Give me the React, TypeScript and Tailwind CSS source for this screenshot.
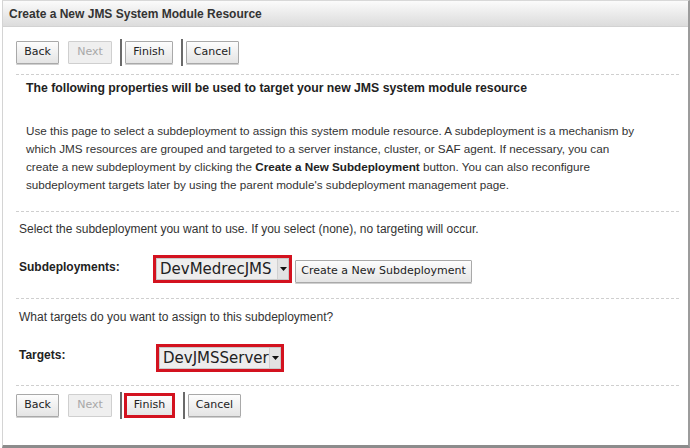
import React from "react";

const btn =
  "h-[23px] flex items-center justify-center whitespace-nowrap border border-[#a9a9a9] rounded-[1px] bg-gradient-to-b from-[#fdfdfd] to-[#e4e4e4] text-[11px] text-[#222] shadow-[0_1px_0_#cfcfcf]";
const btnDisabled =
  "h-[23px] flex items-center justify-center border border-[#cfcfcf] rounded-[1px] bg-[#efefef] text-[11px] text-[#a8a8a8]";

const dejavu = { fontFamily: '"DejaVu Sans", sans-serif' };

function ButtonRow({ redFinish }: { redFinish?: boolean }) {
  return (
    <div className="flex items-center h-[27px]" style={dejavu}>
      <div className={`${btn} w-[43px]`}>Back</div>
      <div className={`${btnDisabled} w-[44px] ml-[9px]`}>Next</div>
      <div className="w-[2px] h-[27px] bg-[#6a6a6a] ml-[8px]" />
      {redFinish ? (
        <div className="ml-[2px] border-[3px] border-[#d3121f] h-[25px] w-[51px] flex">
          <div className="h-full w-full flex items-center justify-center bg-gradient-to-b from-[#fdfdfd] to-[#e4e4e4] text-[11px] text-[#222]">
            Finish
          </div>
        </div>
      ) : (
        <div className={`${btn} w-[48px] ml-[3px]`}>Finish</div>
      )}
      <div className="w-[2px] h-[27px] bg-[#6a6a6a] ml-[8px]" />
      <div className={`${btn} w-[53px] ml-[3px]`}>Cancel</div>
    </div>
  );
}

function Dashed({ className = "" }: { className?: string }) {
  return <div className={`w-[663px] border-t border-dashed border-[#cfcfcf] ${className}`} />;
}

function RedSelect({ label, width }: { label: string; width: string }) {
  return (
    <div className={`border-[3px] border-[#d3121f] h-[28px] ${width} flex`}>
      <div
        className="flex-1 flex items-center bg-[#ededed] border border-[#c8c8c8] pl-[3px] text-[15px] text-[#222]"
        style={dejavu}
      >
        <span className="flex-1 whitespace-nowrap">{label}</span>
        <span className="w-[11px] h-full flex items-center justify-center bg-[#e2e2e2] border-l border-[#d0d0d0]">
          <svg width="7" height="4" viewBox="0 0 7 4">
            <path d="M0 0h7L3.5 4z" fill="#111" />
          </svg>
        </span>
      </div>
    </div>
  );
}

export default function App() {
  return (
    <div
      className="h-[448px] bg-white overflow-hidden flex flex-col border-l border-l-[#d4d4d4] border-r-2 border-r-[#9c9c9c] border-b-[3px] border-b-[#8c8c8c] border-t border-t-[#d8d8d8] ml-[2px]"
      style={{ fontFamily: '"Liberation Sans", Arial, sans-serif', width: 688 }}
    >
      <div className="h-[26px] shrink-0 flex items-center pl-[6px] bg-gradient-to-b from-[#fbfbfb] to-[#dcdcdc] border-b border-[#d2d2d2] text-[12px] font-bold text-[#333]">
        Create a New JMS System Module Resource
      </div>
      <div className="pl-[13px] flex flex-col">
        <div className="mt-[12px]">
          <ButtonRow />
        </div>
        <Dashed className="mt-[8px]" />
        <div className="mt-[6px] pl-[10px] text-[12.25px] leading-[15px] font-bold text-[#222] whitespace-nowrap">
          The following properties will be used to target your new JMS system module resource
        </div>
        <p className="mt-[26px] pl-[10px] text-[11.7px] leading-[18px] text-[#333] whitespace-nowrap">
          Use this page to select a subdeployment to assign this system module resource. A subdeployment is a mechanism by
          <br />
          which JMS resources are grouped and targeted to a server instance, cluster, or SAF agent. If necessary, you can
          <br />
          create a new subdeployment by clicking the <b className="text-[#222]">Create a New Subdeployment</b> button. You can also reconfigure
          <br />
          subdeployment targets later by using the parent module's subdeployment management page.
        </p>
        <Dashed className="mt-[17px]" />
        <div className="mt-[10px] pl-[3px] text-[12px] leading-[15px] text-[#333] whitespace-nowrap">
          Select the subdeployment you want to use. If you select (none), no targeting will occur.
        </div>
        <div className="mt-[18px] flex items-start">
          <div className="w-[137px] pl-[3px] pt-[3px] text-[12px] font-bold text-[#222]">Subdeployments:</div>
          <RedSelect label="DevMedrecJMS" width="w-[139px]" />
          <div className={`${btn} ml-[3px] mt-[5px] w-[177px]`} style={dejavu}>
            Create a New Subdeployment
          </div>
        </div>
        <Dashed className="mt-[15px]" />
        <div className="mt-[11px] pl-[3px] text-[12px] leading-[15px] text-[#333] whitespace-nowrap">
          What targets do you want to assign to this subdeployment?
        </div>
        <div className="mt-[19px] flex items-start">
          <div className="w-[140px] pl-[3px] pt-[2px] text-[12px] font-bold text-[#222]">Targets:</div>
          <RedSelect label="DevJMSServer" width="w-[128px]" />
        </div>
        <Dashed className="mt-[13px]" />
        <div className="mt-[6px]">
          <ButtonRow redFinish />
        </div>
      </div>
    </div>
  );
}
